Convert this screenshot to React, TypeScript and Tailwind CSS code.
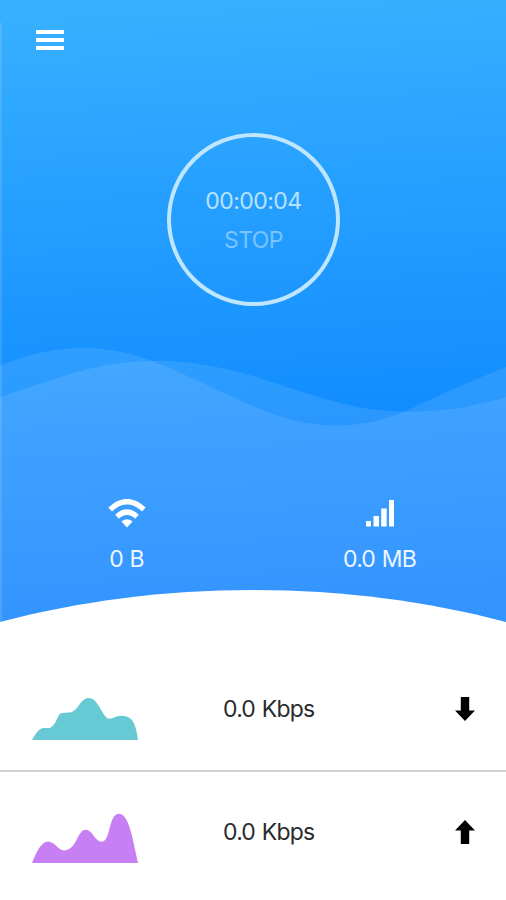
const sans = 'font-[Inter,"Liberation_Sans",sans-serif]';

function Scenery() {
  return (
    <svg className="col-start-1 row-start-1 block" width="506" height="630" viewBox="0 0 506 630" aria-hidden="true">
      <defs>
        <linearGradient id="sky" x1="0" y1="0" x2="0.04" y2="1">
          <stop offset="0" stopColor="#38b1ff" />
          <stop offset="0.66" stopColor="#138eff" />
          <stop offset="1" stopColor="#047bff" />
        </linearGradient>
      </defs>
      <rect width="506" height="630" fill="url(#sky)" />
      <path
        d="M0 366C27 354 56 348 84 348C126 348 157 362 190 377C211 387 232 397 253 406C282 419 308 425.500 337 425.500C365 425.500 388 419 408 410C440 395 475 379 506 367V630H0Z"
        fill="#fff"
        fillOpacity="0.1"
      />
      <path
        d="M0 397C28 388 60 376 92 368C118 362 136 361 160 361C190 361 222 367 253 376C288 387 325 401 363 408C392 413 430 413 465 407C482 404 496 400 506 397V630H0Z"
        fill="#fff"
        fillOpacity="0.1"
      />
      <rect y="23" width="2" height="600" fill="#fff" fillOpacity="0.12" />
      <path d="M0 622C80 601 164 590 253 590C342 590 426 601 506 622V630H0Z" fill="#fff" />
    </svg>
  );
}

function MenuIcon() {
  return (
    <button aria-label="Menu" className="ml-9 mt-[30px] flex w-7 flex-col gap-1">
      <span className="h-1 w-full bg-white" />
      <span className="h-1 w-full bg-white" />
      <span className="h-1 w-full bg-white" />
    </button>
  );
}

function WifiIcon() {
  return (
    <svg width="38" height="30" viewBox="0 0 38 30" fill="none" aria-hidden="true">
      <path d="M2.200 10.500Q19-5.100 35.800 10.500" stroke="#fff" strokeWidth="5.400" />
      <path d="M9 17.800Q19 8.600 29 17.800" stroke="#fff" strokeWidth="5.400" />
      <path d="M13.400 22.500Q19 18 24.600 22.500L19 28.500Z" fill="#fff" />
    </svg>
  );
}

function SignalIcon() {
  return (
    <svg width="28" height="30" viewBox="0 0 28 30" fill="#fff" aria-hidden="true">
      <rect y="22" width="5" height="5.500" />
      <rect x="7.500" y="17" width="5.500" height="10.500" />
      <rect x="15.200" y="9.500" width="5.500" height="18" />
      <rect x="23" y="1" width="5" height="26.500" />
    </svg>
  );
}

function Arrow({ up = false }: { up?: boolean }) {
  return (
    <svg width="20" height="24" viewBox="0 0 20 24" className={up ? "rotate-180" : ""} aria-hidden="true">
      <path d="M5.800 0H14.200V13.500H20L10 24L0 13.500H5.800Z" fill="#000" />
    </svg>
  );
}

function DownloadChart() {
  return (
    <svg width="106" height="50" viewBox="0 0 106 50" aria-hidden="true">
      <path
        d="M0 50C4 43 7 38 12 38C17 38 19 39 23 33C26 28 26 23 31 23C36 22 39 24 44 19C48 15 50 8 57 8C64 8 68 19 73 26C76 30 79 29 83 27C89 25 94 25 99 29C103 33 105 42 106 50Z"
        fill="#67c9d3"
      />
    </svg>
  );
}

function UploadChart() {
  return (
    <svg width="106" height="50" viewBox="0 0 106 50" aria-hidden="true">
      <path
        d="M0 50C4 40 9 28.500 16 28.500C23 28.500 26 37.500 32 37.500C37 37.500 41 34 45 26C48 20 50 16.700 54 16.700C60 16.700 63 28 69 28.700C79 30 76 .7 87 .7C97 .7 101 27 106 50Z"
        fill="#c780f4"
      />
    </svg>
  );
}

export default function App() {
  return (
    <main className={`flex h-[900px] w-[506px] flex-col overflow-hidden bg-white text-[23px] leading-7 font-normal tracking-[-0.8px] [word-spacing:1px] text-[#2b2b2b] ${sans}`}>
      <section className="grid h-[630px] grid-cols-1 grid-rows-1">
        <Scenery />
        <div className="z-10 col-start-1 row-start-1 flex flex-col">
          <MenuIcon />
          <div className="ml-[167px] mt-[83px] flex h-[173px] w-[173px] flex-col items-center gap-[11px] rounded-full border-4 border-[#bfe6ff] pt-[50px]">
            <span className="tracking-[-0.55px] text-[#b8e3ff]">00:00:04</span>
            <span className="tracking-[-0.6px] text-[#7ac5ff]">STOP</span>
          </div>
          <div className="mt-[193px] grid grid-cols-2 text-[#edf6ff]">
            <div className="flex flex-col items-center gap-4">
              <WifiIcon />
              <span>0 B</span>
            </div>
            <div className="flex flex-col items-center gap-4">
              <SignalIcon />
              <span>0.0 MB</span>
            </div>
          </div>
        </div>
      </section>
      <section className="flex h-[142px] items-start border-b-2 border-[#d2d2d2] pl-8 pt-[60px]">
        <DownloadChart />
        <span className="ml-[85px] mt-[5px] w-[232px]">0.0 Kbps</span>
        <div className="mt-[7px]"><Arrow /></div>
      </section>
      <section className="flex items-start pl-8 pt-[41px]">
        <UploadChart />
        <span className="ml-[85px] mt-[5px] w-[232px]">0.0 Kbps</span>
        <div className="mt-[7px]"><Arrow up /></div>
      </section>
    </main>
  );
}
